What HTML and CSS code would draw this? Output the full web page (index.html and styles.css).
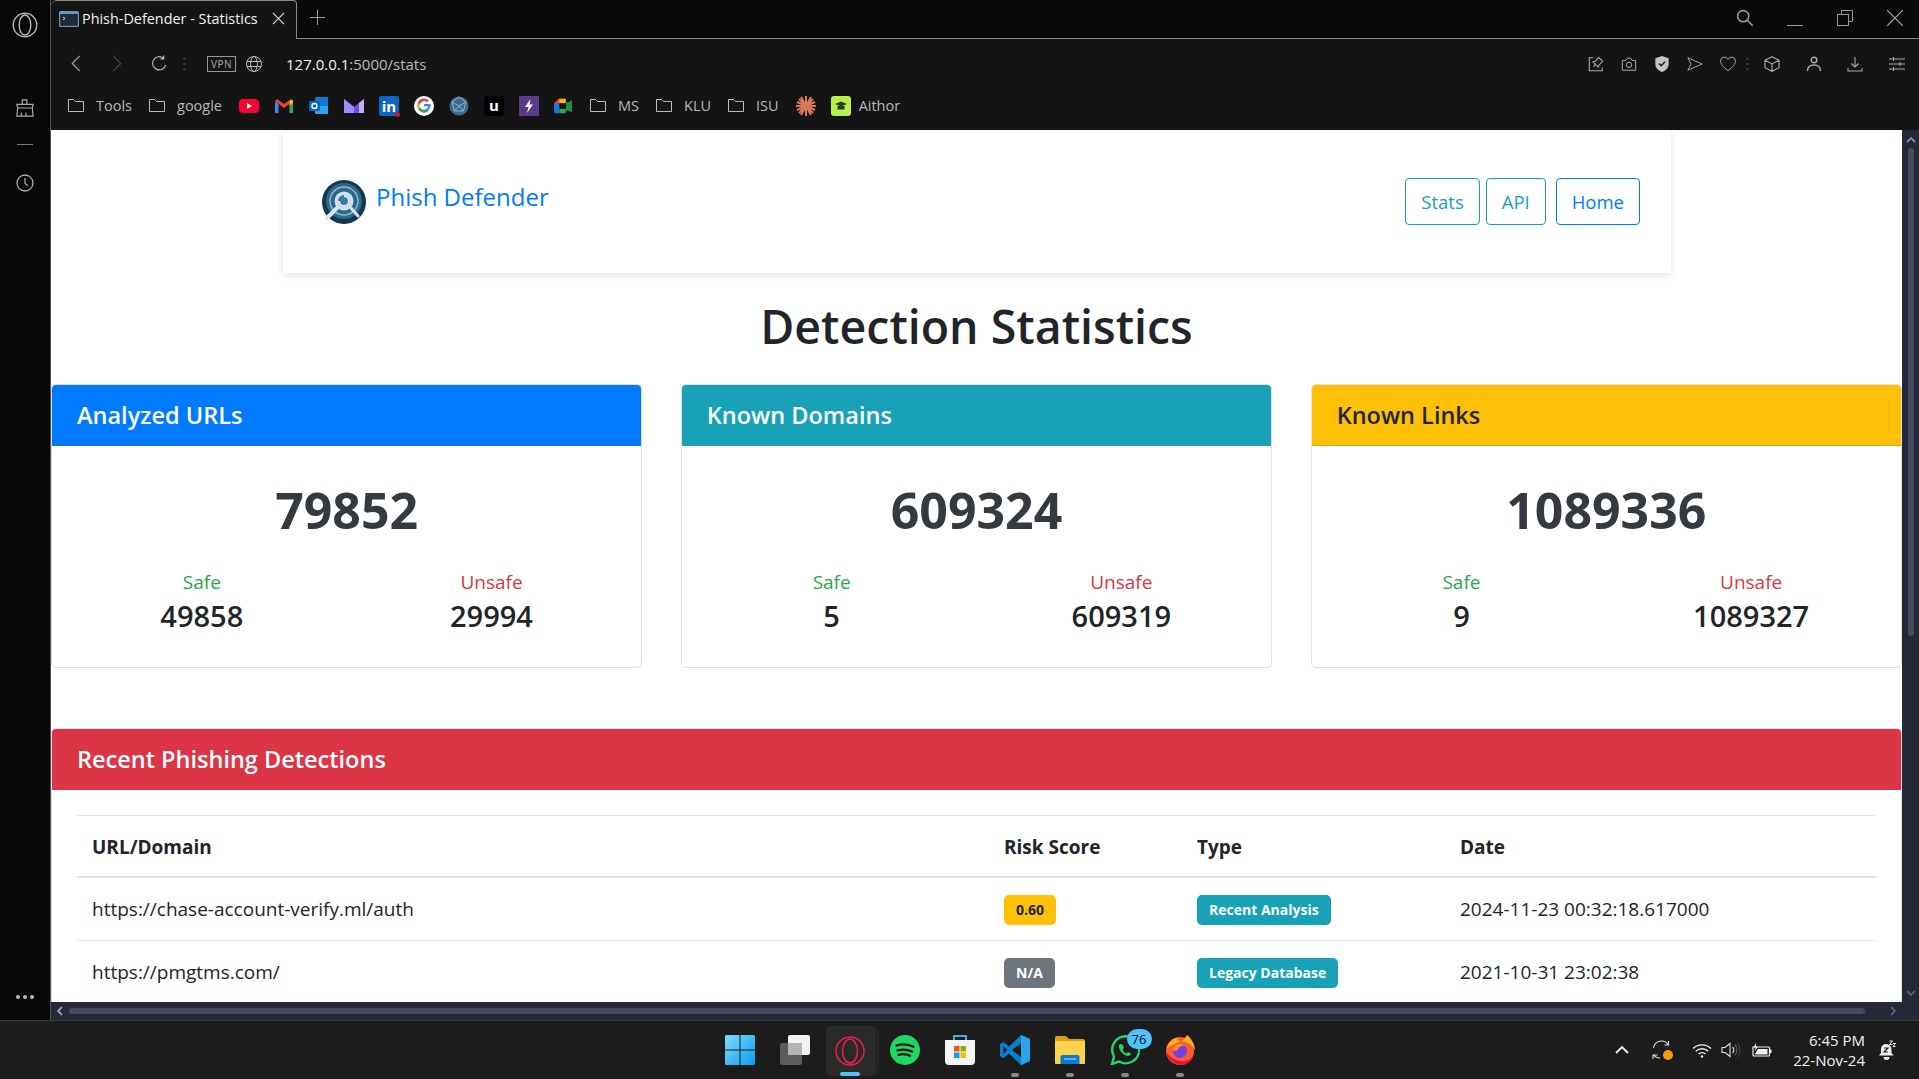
FILE: index.html
```html
<!DOCTYPE html>
<html lang="en">
<head>
    <meta charset="UTF-8">
    <title>Phish-Defender - Statistics</title>
    <link rel="stylesheet" href="styles.css">
</head>
<body>

<div class="browser">
    <!-- opera sidebar -->
    <aside class="sidebar">
        <svg class="side-logo" viewBox="0 0 26 26" fill="none" stroke="#b5b5b5" stroke-width="1.4"><circle cx="13" cy="13" r="11.8"/><ellipse cx="13" cy="13" rx="5.8" ry="10"/></svg>
        <svg class="side-icon side-bag" viewBox="0 0 22 22" fill="none" stroke="#aaa" stroke-width="1.3"><path d="M8 7V2h5v5M3 11h16l1-4H2zM3 11l-1 9h18l-1-9M7 20v-4M12 20v-4"/></svg>
        <div class="side-line"></div>
        <svg class="side-icon" viewBox="0 0 20 20" fill="none" stroke="#aaa" stroke-width="1.3"><circle cx="10" cy="10" r="8"/><path d="M10 5v5.5l3 2"/></svg>
        <div class="side-dots"><i></i><i></i><i></i></div>
    </aside>

    <div class="window">
        <div class="tabstrip">
            <div class="tab">
                <svg class="tab-icon" viewBox="0 0 20 16"><rect width="20" height="16" rx="1.5" fill="#6d93c4"/><rect x="1.2" y="3" width="17.6" height="11.8" fill="#1f2a38"/><path d="M4 6l2 1.5L4 9" stroke="#ddd" fill="none"/></svg>
                <span class="tab-title">Phish-Defender - Statistics</span>
                <svg class="tab-close" viewBox="0 0 14 14" stroke="#ddd" stroke-width="1.2"><path d="M1 1l12 12M13 1L1 13"/></svg>
            </div>
            <svg class="tab-new" viewBox="0 0 16 16" stroke="#999" stroke-width="1.1"><path d="M8 0v16M0 8h16"/></svg>
            <div class="win-controls">
                <svg class="win-search" viewBox="0 0 20 20" fill="none" stroke="#999" stroke-width="1.7"><circle cx="8" cy="8" r="6.2"/><path d="M12.5 12.5l6 6"/></svg>
                <svg class="win-btn" viewBox="0 0 16 16" stroke="#999" stroke-width="1"><path d="M0 15.5h16"/></svg>
                <svg class="win-btn" viewBox="0 0 16 16" fill="none" stroke="#999" stroke-width="1"><rect x=".5" y="4.5" width="11" height="11"/><path d="M4.5 4V.5h11v11H12"/></svg>
                <svg class="win-btn" viewBox="0 0 16 16" stroke="#aaa" stroke-width="1.1"><path d="M0 0l16 16M16 0L0 16"/></svg>
            </div>
        </div>

        <div class="toolbar">
            <svg class="nav-icon nav-back" viewBox="0 0 12 18" fill="none" stroke="#aaa" stroke-width="1.2"><path d="M10 1L2 9l8 8"/></svg>
            <svg class="nav-icon nav-fwd" viewBox="0 0 12 18" fill="none" stroke="#4a4a4a" stroke-width="1.2"><path d="M2 1l8 8-8 8"/></svg>
            <svg class="nav-icon nav-reload" viewBox="0 0 18 18" fill="none" stroke="#bbb" stroke-width="1.2"><path d="M15.5 10.5A7 7 0 1 1 13 3.2M13.5 .5v3.6H10"/></svg>
            <div class="vdots nav-dots"><i></i><i></i><i></i></div>
            <span class="vpn">VPN</span>
            <svg class="nav-globe" viewBox="0 0 16 16" fill="none" stroke="#bbb" stroke-width="1"><circle cx="8" cy="8" r="7.5"/><ellipse cx="8" cy="8" rx="3.4" ry="7.5"/><path d="M1 5.5h14M1 10.5h14"/></svg>
            <span class="url"><b>127.0.0.1</b>:5000/stats</span>

            <div class="tools">
                <span class="tool"><svg viewBox="0 0 18 18" fill="none" stroke="#aaa" stroke-width="1.2"><path d="M6 2H1.500v14.500H16V13M9 9l-3 3M8 6l4-4.500 4.500 4.500-4 4-1 2.500-6-6z"/></svg></span>
                <span class="tool"><svg viewBox="0 0 18 18" fill="none" stroke="#aaa" stroke-width="1.1"><path d="M1.500 5h4l1.500-2.500h4L12.500 5h4v11h-15z"/><circle cx="9" cy="10" r="3"/></svg></span>
                <span class="tool"><svg viewBox="0 0 16 18"><path d="M8 0l7.500 2.500V9c0 4.500-3.500 7.500-7.500 9-4-1.500-7.500-4.500-7.500-9V2.500z" fill="#c4c4c4"/><path d="M4.500 8.500l2.500 2.500 4.500-4.500" fill="none" stroke="#141414" stroke-width="1.600"/></svg></span>
                <span class="tool"><svg viewBox="0 0 18 16" fill="none" stroke="#aaa" stroke-width="1.1"><path d="M1 1l16 7-16 7 3.500-7z"/></svg></span>
                <span class="tool"><svg viewBox="0 0 18 16" fill="none" stroke="#aaa" stroke-width="1.1"><path d="M9 15.500C3 11 .7 8 .7 5A4.300 4.300 0 0 1 9 3a4.300 4.300 0 0 1 8.300 2C17.300 8 15 11 9 15.500z"/></svg></span>
                <div class="vdots"><i></i><i></i><i></i></div>
                <span class="tool tool-wide"><svg viewBox="0 0 16 16" fill="none" stroke="#aaa" stroke-width="1.1"><path d="M8 .7l7 3.600v7.400l-7 3.600-7-3.600V4.300zM1 4.300l7 3.700 7-3.700M8 8v7.300"/></svg></span>
                <span class="tool tool-wide"><svg viewBox="0 0 16 16" fill="none" stroke="#aaa" stroke-width="1.400"><circle cx="8" cy="4" r="2.800"/><path d="M1.500 15c0-4 2.500-6 6.500-6s6.500 2 6.500 6"/></svg></span>
                <span class="tool tool-wide"><svg viewBox="0 0 16 16" fill="none" stroke="#aaa" stroke-width="1.100"><path d="M8 1v10M4.500 7.500L8 11l3.500-3.500M1 12v3h14v-3"/></svg></span>
                <span class="tool tool-wide"><svg viewBox="0 0 16 16" fill="none" stroke="#aaa" stroke-width="1"><path d="M0 3h16M0 8h16M0 13h16M4.500 1v4M11 6v4M4.500 11v4"/></svg></span>
            </div>
        </div>

        <div class="bookmarks">
            <a class="bm"><svg class="folder" viewBox="0 0 16 13"><path d="M.5 12.500V.5h5l2 2h8v10z"/></svg>Tools</a>
            <a class="bm"><svg class="folder" viewBox="0 0 16 13"><path d="M.5 12.500V.5h5l2 2h8v10z"/></svg>google</a>
            <svg class="fav" viewBox="0 0 20 20"><rect y="3" width="20" height="14" rx="4" fill="#ff0033"/><path d="M8 7l5 3-5 3z" fill="#fff"/></svg>
            <svg class="fav" viewBox="0 0 20 20"><path d="M1 5v12h3.500V8z" fill="#4285f4"/><path d="M19 5v12h-3.500V8z" fill="#34a853"/><path d="M1 5l9 7 9-7-2-2-7 5-7-5z" fill="#ea4335"/><path d="M15.500 5l3.500-1v3l-3.500 2.500z" fill="#fbbc04"/></svg>
            <svg class="fav" viewBox="0 0 20 20"><rect x="6" y="1" width="13" height="17" rx="1" fill="#0f78d4"/><path d="M6 10h13v8H6z" fill="#28a8ea"/><rect x="0" y="5" width="11" height="10" rx="1" fill="#0364b8"/><circle cx="5.500" cy="10" r="2.500" fill="none" stroke="#fff" stroke-width="1.400"/></svg>
            <svg class="fav" viewBox="0 0 20 20"><path d="M0 3l10 8 10-8v13a1 1 0 0 1-1 1H1a1 1 0 0 1-1-1z" fill="#6d4aff"/><path d="M20 3v13a1 1 0 0 1-1 1h-4V7z" fill="#c4b0ff"/><path d="M0 3l10 8v6H1a1 1 0 0 1-1-1z" fill="#a58bff"/></svg>
            <span class="fav fav-in">in<i></i></span>
            <svg class="fav" viewBox="0 0 20 20"><circle cx="10" cy="10" r="10" fill="#fff"/><path d="M10 9.200h5.500a5.600 5.600 0 1 1-1.700-4" fill="none" stroke="#4285f4" stroke-width="2.200"/><path d="M13.800 5.200A5.600 5.600 0 0 0 5 7.500" fill="none" stroke="#ea4335" stroke-width="2.200"/><path d="M5 7.500a5.600 5.600 0 0 0 0 5" fill="none" stroke="#fbbc04" stroke-width="2.200"/><path d="M5 12.500a5.600 5.600 0 0 0 9 1.500" fill="none" stroke="#34a853" stroke-width="2.200"/></svg>
            <svg class="fav" viewBox="0 0 20 20" fill="none"><circle cx="10" cy="10" r="9.500" fill="#3d6a8a"/><path d="M10 1l7 5-2.500 9h-9L3 6zM3 6l7 4 7-4M10 10l-4.500 5M10 10l4.500 5" stroke="#8cc0dc" stroke-width=".9"/></svg>
            <span class="fav fav-u">u<i></i></span>
            <svg class="fav" viewBox="0 0 20 20"><rect width="20" height="20" fill="#5b3a8a"/><path d="M11.500 3L6 11h3.500L8 17l6-8.500h-3.500z" fill="#fff"/></svg>
            <svg class="fav fav-meet" viewBox="0 0 20 20"><path d="M5 2h8v5H6v6H0V7z" fill="#ea4335"/><path d="M6 2h7v5H6z" fill="#fbbc04"/><path d="M0 7h6v11H2a2 2 0 0 1-2-2z" fill="#1a73e8"/><path d="M6 13h7v5H6z" fill="#34a853"/><path d="M13 5v11l2-1 5 2V4l-5 2z" fill="#1e8e3e"/><rect x="6" y="7" width="7" height="6" fill="#141414"/></svg>
            <a class="bm bm-first"><svg class="folder" viewBox="0 0 16 13"><path d="M.5 12.500V.5h5l2 2h8v10z"/></svg>MS</a>
            <a class="bm"><svg class="folder" viewBox="0 0 16 13"><path d="M.5 12.500V.5h5l2 2h8v10z"/></svg>KLU</a>
            <a class="bm"><svg class="folder" viewBox="0 0 16 13"><path d="M.5 12.500V.5h5l2 2h8v10z"/></svg>ISU</a>
            <svg class="fav" viewBox="0 0 20 20" stroke="#d97757" stroke-width="2"><path d="M10 0v20M0 10h20M3 3l14 14M17 3L3 17M5 1l10 18M15 1L5 19M1 6l18 8M19 6L1 14"/></svg>
            <a class="bm bm-aithor"><svg class="fav" viewBox="0 0 20 20"><rect width="20" height="20" rx="3" fill="#b4f24a"/><path d="M4 8l6-2.500L16 8l-6 2.500z" fill="#2b3a2b"/><path d="M6.500 10v3.500h7V10" fill="#2b3a2b"/></svg>Aithor</a>
        </div>

        <div class="viewport">
            <div class="page-area">
                <main class="page">
                    <nav class="topnav">
                        <a class="brand">
                            <svg class="brand-logo" viewBox="0 0 44 44">
                                <circle cx="22" cy="22" r="22" fill="#14374f"/>
                                <circle cx="22" cy="21" r="18" fill="#2c6a8d"/>
                                <circle cx="22" cy="21" r="14" fill="none" stroke="#8fb8cc" stroke-width="1.500"/>
                                <circle cx="22" cy="21" r="9.500" fill="#cfe0e8"/>
                                <circle cx="22" cy="21" r="6" fill="#3a7a9c"/>
                                <path d="M22 16a5 5 0 1 1-5 5" fill="none" stroke="#e9f1f4" stroke-width="2"/>
                                <path d="M15 28L5 38" stroke="#d9e5ea" stroke-width="4" stroke-linecap="round"/>
                                <path d="M29 28l7 8" stroke="#d9e5ea" stroke-width="3" stroke-linecap="round"/>
                            </svg>
                            <span class="brand-text">Phish Defender</span>
                        </a>
                        <div class="nav-btns">
                            <a class="btn btn-info">Stats</a>
                            <a class="btn btn-info">API</a>
                            <a class="btn btn-primary">Home</a>
                        </div>
                    </nav>

                    <h1 class="title">Detection Statistics</h1>

                    <section class="stats">
                        <div class="card">
                            <div class="card-header head-blue">Analyzed URLs</div>
                            <div class="card-body">
                                <div class="total">79852</div>
                                <div class="split">
                                    <div><p class="lbl-safe">Safe</p><p class="val">49858</p></div>
                                    <div><p class="lbl-unsafe">Unsafe</p><p class="val">29994</p></div>
                                </div>
                            </div>
                        </div>
                        <div class="card">
                            <div class="card-header head-teal">Known Domains</div>
                            <div class="card-body">
                                <div class="total">609324</div>
                                <div class="split">
                                    <div><p class="lbl-safe">Safe</p><p class="val">5</p></div>
                                    <div><p class="lbl-unsafe">Unsafe</p><p class="val">609319</p></div>
                                </div>
                            </div>
                        </div>
                        <div class="card">
                            <div class="card-header head-yellow">Known Links</div>
                            <div class="card-body">
                                <div class="total">1089336</div>
                                <div class="split">
                                    <div><p class="lbl-safe">Safe</p><p class="val">9</p></div>
                                    <div><p class="lbl-unsafe">Unsafe</p><p class="val">1089327</p></div>
                                </div>
                            </div>
                        </div>
                    </section>

                    <section class="card recent">
                        <div class="card-header head-red">Recent Phishing Detections</div>
                        <div class="recent-body">
                            <table class="det-table">
                                <thead>
                                    <tr>
                                        <th class="col-url">URL/Domain</th>
                                        <th class="col-risk">Risk Score</th>
                                        <th class="col-type">Type</th>
                                        <th>Date</th>
                                    </tr>
                                </thead>
                                <tbody>
                                    <tr>
                                        <td>https://chase-account-verify.ml/auth</td>
                                        <td><span class="badge badge-warn">0.60</span></td>
                                        <td><span class="badge badge-info">Recent Analysis</span></td>
                                        <td>2024-11-23 00:32:18.617000</td>
                                    </tr>
                                    <tr>
                                        <td>https://pmgtms.com/</td>
                                        <td><span class="badge badge-grey">N/A</span></td>
                                        <td><span class="badge badge-info">Legacy Database</span></td>
                                        <td>2021-10-31 23:02:38</td>
                                    </tr>
                                </tbody>
                            </table>
                        </div>
                    </section>
                </main>
                <div class="vscroll">
                    <svg viewBox="0 0 10 6" class="arrow-v" fill="none" stroke="#8a8c9c" stroke-width="1.800"><path d="M1 5l4-4 4 4"/></svg>
                    <div class="vthumb"></div>
                    <svg viewBox="0 0 10 6" class="arrow-v arrow-end" fill="none" stroke="#5d5f6e" stroke-width="1.800"><path d="M1 1l4 4 4-4"/></svg>
                </div>
            </div>
            <div class="hscroll">
                <svg viewBox="0 0 6 10" class="arrow-h" fill="none" stroke="#a0a2b0" stroke-width="1.800"><path d="M5 1L1 5l4 4"/></svg>
                <div class="hthumb"></div>
                <svg viewBox="0 0 6 10" class="arrow-h" fill="none" stroke="#5d5f6e" stroke-width="1.800"><path d="M1 1l4 4-4 4"/></svg>
            </div>
        </div>
    </div>
</div>

<footer class="taskbar">
    <div class="task-apps">
        <span class="app"><svg viewBox="0 0 30 30"><defs><linearGradient id="win" x1="0" y1="0" x2="1" y2="1"><stop offset="0" stop-color="#7fdcfb"/><stop offset="1" stop-color="#0a9cf0"/></linearGradient></defs><path d="M0 1.500A1.500 1.500 0 0 1 1.500 0h13v14.500H0zM15.500 0h13A1.500 1.500 0 0 1 30 1.500v13H15.500zM0 15.500h14.500V30h-13A1.500 1.500 0 0 1 0 28.500zM15.500 15.500H30v13a1.500 1.500 0 0 1-1.500 1.500h-13z" fill="url(#win)"/></svg></span>
        <span class="app"><svg viewBox="0 0 30 30"><rect x="0" y="8" width="22" height="22" rx="2" fill="#5c5c5c"/><rect x="8" y="0" width="22" height="20" rx="2" fill="#f2f2f2"/><rect x="8" y="8" width="14" height="12" fill="#b4b4b4"/></svg></span>
        <span class="app app-active"><svg viewBox="0 0 30 30" fill="none" stroke="#e8204a" stroke-width="1.500"><circle cx="15" cy="15" r="14"/><ellipse cx="15" cy="15" rx="7.500" ry="12"/></svg><i class="run run-on"></i></span>
        <span class="app"><svg viewBox="0 0 30 30"><circle cx="15" cy="15" r="15" fill="#1ed760"/><path d="M6.500 10.500c6-1.800 12-1.300 17 1.300M7.500 15.300c5-1.300 10-.9 14.500 1.200M8.500 19.800c4-1 8-.7 11.500 1" fill="none" stroke="#111" stroke-width="2.300" stroke-linecap="round"/></svg></span>
        <span class="app"><svg viewBox="0 0 30 30"><path d="M9 5V1h12v4" fill="none" stroke="#2bb0f0" stroke-width="2"/><path d="M0 5h30v21a4 4 0 0 1-4 4H4a4 4 0 0 1-4-4z" fill="#f5f5f5"/><rect x="9" y="11" width="5.500" height="5.500" fill="#f25022"/><rect x="15.500" y="11" width="5.500" height="5.500" fill="#7fba00"/><rect x="9" y="17.500" width="5.500" height="5.500" fill="#00a4ef"/><rect x="15.500" y="17.500" width="5.500" height="5.500" fill="#ffb900"/></svg></span>
        <span class="app"><svg viewBox="0 0 30 30"><path d="M21 0l9 4v22l-9 4-12-11.500-5.500 4.500L0 21v-12l3.500-2 5.500 4.500z" fill="#0a7fcc"/><path d="M21 0l9 4v22l-9 4z" fill="#29a5ee"/><path d="M21 8v14l-9-7z" fill="#1f1f1f"/><path d="M3.500 11L7 15l-3.500 4z" fill="#1f1f1f"/></svg><i class="run"></i></span>
        <span class="app"><svg viewBox="0 0 30 30"><path d="M0 3a2 2 0 0 1 2-2h9l3 3h14a2 2 0 0 1 2 2v4H0z" fill="#d9a017"/><path d="M0 6h30v22a1 1 0 0 1-1 1H1a1 1 0 0 1-1-1z" fill="#fbd24e"/><path d="M5.500 29v-7a2 2 0 0 1 2-2h15a2 2 0 0 1 2 2v7z" fill="#0f78d4"/><path d="M9 24h12" stroke="#7dc4f5" stroke-width="1.500"/></svg><i class="run"></i></span>
        <span class="app"><svg viewBox="0 0 30 30" fill="none"><path d="M2 29l2-7.500A13.500 13.500 0 1 1 9 26.500z" stroke="#25d366" stroke-width="2.400"/><path d="M10 9c-1.500 1-1.500 3 0 6s4 5 7 6c2 .500 4-1 4-2.500l-3-1.500-1.500 1.500c-2-1-3-2-4-4l1.500-1.500-1.500-3.500z" fill="#25d366"/></svg><span class="wa-count">76</span><i class="run"></i></span>
        <span class="app"><svg viewBox="0 0 30 30"><circle cx="15" cy="16" r="14" fill="#ff5b2d"/><path d="M2 13C4 6 9 3 13 3c-1 2 0 3 3 4 3-3 5-5 6-7 4 3 8 9 8 15C25 6 15 5 10 9z" fill="#ffb01f"/><circle cx="15" cy="16" r="7" fill="#7542e5"/><path d="M8 16a7 7 0 0 1 12-5c-4-1-7 1-7 4z" fill="#ff980e"/><path d="M1 17c2 9 9 13 15 13 7 0 12-5 13-11-3 6-8 8-13 7C9 25 5 22 1 17z" fill="#e5143d"/></svg><i class="run"></i></span>
    </div>
    <div class="tray">
        <svg class="tray-chevron" viewBox="0 0 14 8" fill="none" stroke="#eee" stroke-width="1.800"><path d="M1 7l6-6 6 6"/></svg>
        <span class="tray-sync"><svg viewBox="0 0 20 20" fill="none" stroke="#ddd" stroke-width="1.100"><path d="M1.500 8A8 8 0 0 1 16 4.500M16.500 1v4h-4M1 19v-4h4.500M1.500 15A8 8 0 0 0 8 18"/></svg><i></i></span>
        <svg class="tray-wifi" viewBox="0 0 20 15" fill="none" stroke="#eee" stroke-width="1.400"><path d="M1 5.500a13 13 0 0 1 18 0M3.800 8.300a9 9 0 0 1 12.400 0M6.600 11a5 5 0 0 1 6.800 0"/><circle cx="10" cy="13.500" r="1.200" fill="#eee" stroke="none"/></svg>
        <svg class="tray-vol" viewBox="0 0 20 16" fill="none" stroke="#ddd" stroke-width="1.100"><path d="M1 5.500h3L9 1.500v13L4 10.500H1z"/><path d="M11.500 5a4 4 0 0 1 0 6"/><path d="M14 2.800a8 8 0 0 1 0 10.400" stroke="#666"/><path d="M16.500 1a11 11 0 0 1 0 14" stroke="#444"/></svg>
        <svg class="tray-batt" viewBox="0 0 20 14"><path d="M1 4h15.500a1 1 0 0 1 1 1v7a1 1 0 0 1-1 1H2a1 1 0 0 1-1-1z" fill="none" stroke="#eee" stroke-width="1.200"/><path d="M3 11L6 6h9.500v5.500H3z" fill="#eee"/><rect x="18" y="6.500" width="1.500" height="3.500" fill="#eee"/><path d="M4 0L1.500 4.500h2L3 8l3-4.500H4z" fill="#eee"/></svg>
        <div class="clock"><span>6:45 PM</span><span>22-Nov-24</span></div>
        <svg class="tray-bell" viewBox="0 0 18 20"><path d="M8 4a5.500 5.500 0 0 1 5.500 5.500V13l2 2.500H1L3 13V9A5 5 0 0 1 8 4z" fill="#eee"/><path d="M5.500 17h6a3 3 0 0 1-6 0z" fill="#eee"/><path d="M6 8h4l-4 4h4" fill="none" stroke="#222" stroke-width="1.200"/><path d="M11.500 1h3l-3 3.500h3M15 3.500h2.500L15 6.500h2.500" fill="none" stroke="#eee" stroke-width="1"/></svg>
    </div>
</footer>

</body>
</html>
```

FILE: styles.css
```css
* {
    box-sizing: border-box;
}
html, body {
    margin: 0;
    height: 100%;
    overflow: hidden;
}
body {
    display: flex;
    flex-direction: column;
    font-family: "Open Sans", "Noto Sans", sans-serif;
    background-color: #1c1c1c;
    color: #212529;
}
p, h1 {
    margin: 0;
}
svg {
    display: block;
    flex: none;
}

/* browser frame */
.browser {
    flex: 1;
    display: flex;
    min-height: 0;
}
.sidebar {
    width: 50px;
    flex: none;
    background-color: #070707;
    display: flex;
    flex-direction: column;
    align-items: center;
    padding-top: 12px;
    padding-bottom: 21px;
}
.side-logo {
    width: 26px;
    height: 26px;
}
.side-icon {
    width: 20px;
    height: 20px;
    margin-top: 28px;
}
.side-bag {
    margin-top: 60px;
}
.side-line {
    width: 16px;
    height: 1px;
    background-color: #777;
    margin-top: 26px;
}
.side-dots {
    margin-top: auto;
    display: flex;
    gap: 3px;
}
.side-dots i {
    width: 4px;
    height: 4px;
    border-radius: 50%;
    background-color: #bbb;
}
.window {
    flex: 1;
    min-width: 0;
    display: flex;
    flex-direction: column;
    border-left: 1px solid #555;
}

/* tab strip */
.tabstrip {
    height: 39px;
    flex: none;
    display: flex;
    align-items: center;
    background-color: #0a0a0a;
    border-bottom: 1px solid #8a8a8a;
}
.tab {
    width: 246px;
    height: 39px;
    flex: none;
    display: flex;
    align-items: center;
    padding: 0 8px 2px 8px;
    background-color: #141414;
    border-top: 1px solid #8a8a8a;
    border-right: 1px solid #8a8a8a;
    border-top-left-radius: 6px;
    border-top-right-radius: 4px;
    color: #f2f2f2;
    font-size: 14.4px;
}
.tab-icon {
    width: 20px;
    height: 16px;
}
.tab-title {
    margin-left: 3px;
    flex: 1;
    white-space: nowrap;
}
.tab-close {
    width: 13px;
    height: 13px;
    margin-right: 3px;
}
.tab-new {
    width: 15px;
    height: 15px;
    margin-left: 13px;
    margin-bottom: 3px;
}
.win-controls {
    margin-left: auto;
    display: flex;
    align-items: center;
    padding-right: 16px;
    padding-bottom: 2px;
}
.win-search {
    width: 18px;
    height: 18px;
    margin-right: 33px;
}
.win-btn {
    width: 16px;
    height: 16px;
    margin-left: 34px;
}
.win-search + .win-btn {
    margin-left: 0;
}

/* address row */
.toolbar {
    height: 49px;
    flex: none;
    display: flex;
    align-items: center;
    background-color: #141414;
    padding-left: 19px;
}
.nav-icon {
    height: 17px;
    width: 12px;
}
.nav-fwd {
    margin-left: 29px;
}
.nav-reload {
    width: 17px;
    margin-left: 28px;
}
.vdots {
    display: flex;
    flex-direction: column;
    gap: 3px;
    align-items: center;
    width: 7px;
    flex: none;
}
.vdots i {
    width: 3px;
    height: 2px;
    background-color: #333;
}
.nav-dots {
    margin-left: 13px;
}
.vpn {
    margin-left: 19px;
    width: 29px;
    height: 16px;
    border: 1px solid #999;
    color: #aaa;
    font-size: 10px;
    line-height: 14px;
    text-align: center;
    letter-spacing: .5px;
}
.nav-globe {
    width: 16px;
    height: 16px;
    margin-left: 10px;
}
.url {
    margin-left: 24px;
    font-size: 15px;
    color: #b9b9b9;
    white-space: nowrap;
}
.url b {
    font-weight: 400;
    color: #f2f2f2;
}
.tools {
    margin-left: auto;
    display: flex;
    align-items: center;
    padding-right: 1px;
}
.tool {
    width: 33px;
    height: 20px;
    display: flex;
    align-items: center;
    justify-content: center;
}
.tool svg {
    width: 16px;
    height: 16px;
}
.tool-wide {
    width: 41.7px;
}

/* bookmarks */
.bookmarks {
    height: 42px;
    flex: none;
    display: flex;
    align-items: center;
    gap: 15px;
    background-color: #141414;
    padding-left: 17px;
    padding-bottom: 7px;
    color: #b8b8b8;
    font-size: 14.500px;
}
.bm {
    display: flex;
    align-items: center;
    gap: 12px;
    margin-right: 2px;
    white-space: nowrap;
}
.bm-first {
    margin-left: 3px;
}
.bm-aithor {
    gap: 8px;
}
.folder {
    width: 16px;
    height: 13px;
    fill: none;
    stroke: #bbb;
}
.fav {
    width: 20px;
    height: 20px;
    flex: none;
}
.fav-meet {
    width: 18px;
    height: 18px;
}
.fav-in {
    position: relative;
    background-color: #0a66c2;
    color: #fff;
    font-weight: 700;
    font-size: 15px;
    line-height: 20px;
    text-align: center;
    border-radius: 2px;
}
.fav-in i {
    position: absolute;
    right: -1px;
    bottom: -1px;
    width: 5px;
    height: 5px;
    border-radius: 50%;
    background-color: #d11124;
}
.fav-u {
    position: relative;
    background-color: #000;
    color: #fff;
    font-weight: 700;
    font-size: 15px;
    line-height: 18px;
    text-align: center;
    border-radius: 4px;
}

/* page area */
.viewport {
    flex: 1;
    min-height: 0;
    display: flex;
    flex-direction: column;
}
.page-area {
    flex: 1;
    min-height: 0;
    display: flex;
}
.page {
    flex: 1;
    min-width: 0;
    overflow: hidden;
    background-color: #fff;
}
.vscroll {
    width: 17px;
    flex: none;
    background-color: #252836;
    display: flex;
    flex-direction: column;
    align-items: center;
    padding: 7px 0 6px;
}
.arrow-v {
    width: 10px;
    height: 6px;
}
.vthumb {
    width: 6px;
    height: 488px;
    border-radius: 3px;
    background-color: #474a60;
    margin-top: 5px;
}
.arrow-end {
    margin-top: auto;
}
.hscroll {
    height: 18px;
    flex: none;
    background-color: #252836;
    display: flex;
    align-items: center;
    padding: 0 23px 0 6px;
}
.arrow-h {
    width: 6px;
    height: 10px;
}
.hthumb {
    flex: 1;
    height: 6px;
    border-radius: 3px;
    background-color: #474a60;
    margin: 0 25px 0 6px;
}

/* top nav card */
.topnav {
    width: 1388px;
    height: 143px;
    margin-left: 232px;
    padding: 0 31px 0 39px;
    display: flex;
    align-items: center;
    justify-content: space-between;
    background-color: #fff;
    box-shadow: 0 2px 8px rgba(0, 0, 0, 0.12);
}
.brand {
    display: flex;
    align-items: center;
    gap: 10px;
}
.brand-logo {
    width: 44px;
    height: 44px;
}
.brand-text {
    font-size: 24px;
    font-weight: 500;
    color: #007bff;
    padding-bottom: 10px;
    white-space: nowrap;
}
.nav-btns {
    display: flex;
}
.btn {
    height: 47px;
    padding: 0 15px;
    border: 1px solid;
    border-radius: 4px;
    font-size: 18.500px;
    line-height: 45px;
    margin-left: 6px;
}
.btn-info {
    color: #17a2b8;
    border-color: #17a2b8;
}
.btn-primary {
    color: #007bff;
    border-color: #007bff;
    margin-left: 10px;
}
.title {
    margin-top: 20px;
    height: 91px;
    text-align: center;
    font-size: 46.500px;
    line-height: 66px;
    font-weight: 600;
    color: #212529;
}

/* stat cards */
.stats {
    display: grid;
    grid-template-columns: repeat(3, 1fr);
    gap: 38.500px;
}
.card {
    border: 1px solid #dfdfdf;
    border-radius: 5px;
    overflow: hidden;
    background-color: #fff;
}
.card-header {
    height: 61px;
    padding-left: 25px;
    font-size: 23.500px;
    font-weight: 600;
    line-height: 61px;
    color: #fff;
}
.head-blue {
    background-color: #007bff;
}
.head-teal {
    background-color: #17a2b8;
}
.head-yellow {
    background-color: #ffc107;
    color: #212529;
    border-bottom: 1px solid #d9a406;
}
.head-red {
    background-color: #dc3545;
}
.card-body {
    height: 221px;
    padding: 30px 20px 0;
    text-align: center;
}
.total {
    font-size: 50px;
    line-height: 68px;
    font-weight: 700;
    color: #343a40;
}
.split {
    display: grid;
    grid-template-columns: 1fr 1fr;
    margin: 24px -15px 0;
    font-size: 19px;
}
.lbl-safe {
    color: #28a745;
    line-height: 29px;
}
.lbl-unsafe {
    color: #dc3545;
    line-height: 29px;
}
.val {
    font-size: 29px;
    font-weight: 600;
    line-height: 38px;
}

/* recent detections */
.recent {
    margin-top: 60px;
    border-bottom: none;
    border-radius: 5px 5px 0 0;
}
.recent .card-header {
    height: 61px;
}
.recent-body {
    padding: 25px 25px 0 25px;
}
.det-table {
    width: 100%;
    table-layout: fixed;
    border-collapse: collapse;
    font-size: 19px;
}
.det-table th, .det-table td {
    padding: 15px;
    text-align: left;
    border-top: 1px solid #dee2e6;
    line-height: 30px;
    white-space: nowrap;
}
.det-table th {
    font-weight: 700;
    padding: 16px 15px 14px;
    border-bottom: 2px solid #dee2e6;
}
.col-url {
    width: 912px;
}
.col-risk {
    width: 193px;
}
.col-type {
    width: 263px;
}
.badge {
    display: inline-block;
    height: 30px;
    padding: 0 12px;
    border-radius: 5px;
    font-size: 14px;
    font-weight: 700;
    line-height: 30px;
    color: #fff;
    vertical-align: middle;
}
.badge-warn {
    background-color: #ffc107;
    color: #212529;
}
.badge-info {
    background-color: #17a2b8;
}
.badge-grey {
    background-color: #6c757d;
}

/* windows taskbar */
.taskbar {
    height: 59px;
    flex: none;
    position: relative;
    display: flex;
    justify-content: center;
    padding-left: 1px;
    background-color: #1c1c1c;
    border-top: 1px solid #3c3c3c;
}
.task-apps {
    display: flex;
}
.app {
    position: relative;
    width: 55px;
    display: flex;
    align-items: center;
    justify-content: center;
}
.app svg {
    width: 30px;
    height: 30px;
}
.app-active {
    background-color: #2a2a2a;
    border-radius: 5px;
    margin: 5px 3px 3px;
    width: 49px;
    box-shadow: 4px 0 0 #242424;
}
.run {
    position: absolute;
    bottom: 2px;
    left: 50%;
    width: 8px;
    height: 4px;
    margin-left: -4px;
    border-radius: 2px;
    background-color: #888;
}
.run-on {
    width: 20px;
    margin-left: -10px;
    bottom: 0;
    background-color: #4cc2ff;
}
.wa-count {
    position: absolute;
    left: 29px;
    top: 8px;
    width: 25px;
    height: 20px;
    border-radius: 10px;
    background-color: #4cc2ff;
    color: #111;
    font-size: 13px;
    line-height: 20px;
    text-align: center;
}
.tray {
    position: absolute;
    right: 0;
    top: 0;
    bottom: 0;
    display: flex;
    align-items: center;
    padding-right: 23px;
    color: #f2f2f2;
}
.tray-chevron {
    width: 14px;
    height: 8px;
}
.tray-sync {
    position: relative;
    width: 20px;
    height: 20px;
    margin-left: 23px;
}
.tray-sync i {
    position: absolute;
    right: -1px;
    bottom: 0;
    width: 10px;
    height: 10px;
    border-radius: 50%;
    background-color: #f59a0c;
}
.tray-wifi {
    width: 20px;
    height: 15px;
    margin-left: 20px;
}
.tray-vol {
    width: 20px;
    height: 16px;
    margin-left: 9px;
}
.tray-batt {
    width: 20px;
    height: 14px;
    margin-left: 11px;
}
.clock {
    display: flex;
    flex-direction: column;
    align-items: flex-end;
    margin-left: 20px;
    font-size: 15px;
    line-height: 20px;
    width: 73px;
}
.tray-bell {
    width: 18px;
    height: 20px;
    margin-left: 13px;
}
```
